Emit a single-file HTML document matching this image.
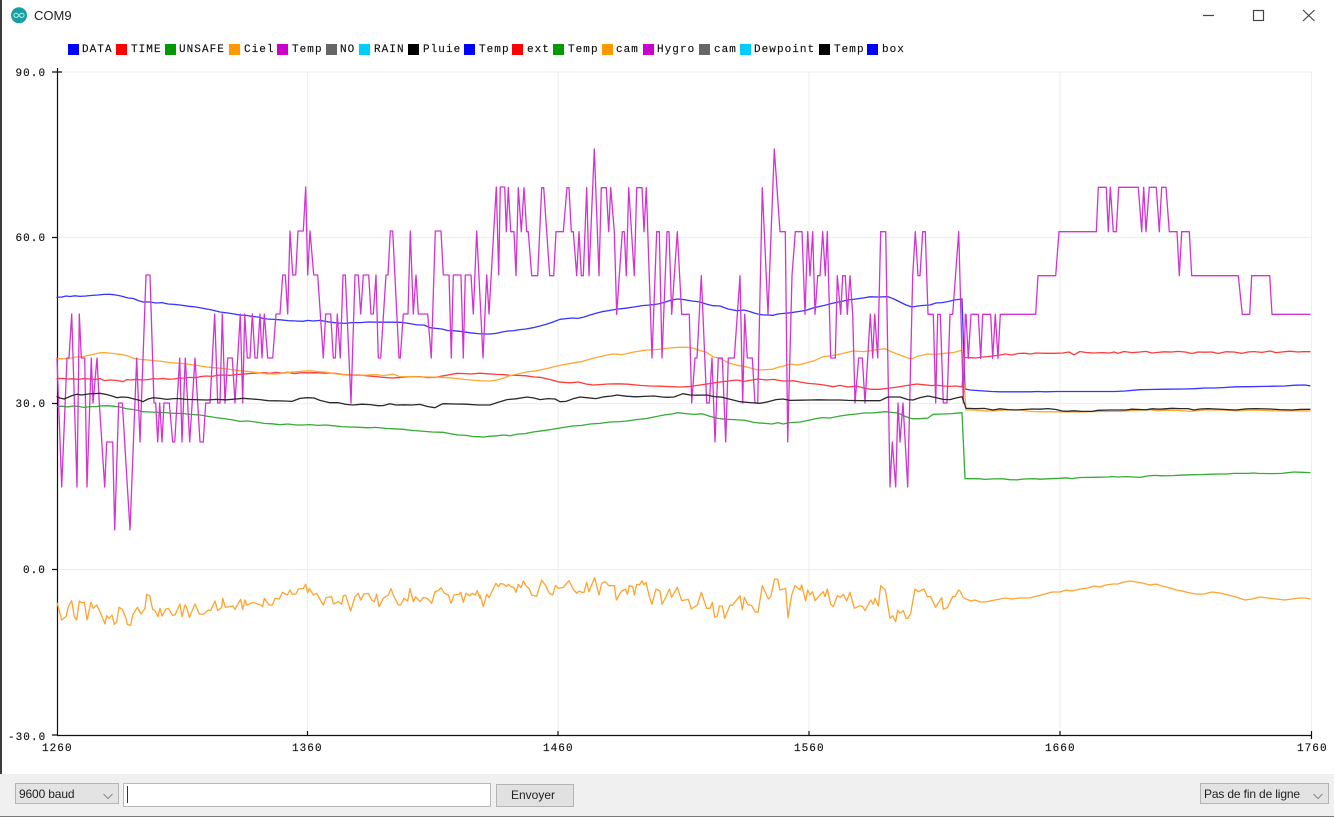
<!DOCTYPE html>
<html><head><meta charset="utf-8"><title>COM9</title>
<style>
html,body{margin:0;padding:0;background:#fff}
body{width:1334px;height:817px;position:relative;overflow:hidden;font-family:"Liberation Sans",sans-serif}
svg{position:absolute;left:0;top:0}
svg.chart{filter:blur(.3px)}
.t{position:absolute;font:13px "Liberation Sans",sans-serif;color:#222;left:34px;top:8px;filter:blur(.25px)}
.bar{position:absolute;left:0;top:774px;width:1334px;height:43px;background:#f0f0f0}
.sel{position:absolute;box-sizing:border-box;background:#e3e3e3;border:1px solid #b4b4b4;font-size:12px;color:#222;line-height:20px;padding-left:3px;letter-spacing:-.15px;filter:blur(.25px)}
.inp{position:absolute;box-sizing:border-box;left:123px;top:783px;width:368px;height:24px;background:#fff;border:1px solid #b9b9b9}
.btn{position:absolute;box-sizing:border-box;left:496px;top:784px;width:78px;height:23px;background:#e1e1e1;border:1px solid #b4b4b4;font-size:12px;color:#222;text-align:center;line-height:21px;padding-right:4px;filter:blur(.25px)}
.mono{font-family:"Liberation Mono",monospace;font-size:11px;fill:#111;stroke:#111;stroke-width:.15px;letter-spacing:1.05px}
.ln{fill:none;stroke-width:1.3;stroke-linejoin:round;stroke-linecap:round}
</style></head><body>
<svg class="chart" width="1334" height="817" viewBox="0 0 1334 817">
<!-- grid -->
<g stroke="#efefef" stroke-width="1.2">
<path d="M57 72H1312M57 237.5H1312M57 403.5H1312M57 569.5H1312"/>
<path d="M307.5 72V735M558 72V735M809 72V735M1060 72V735M1311.5 72V735"/>
</g>
<!-- axes -->
<g stroke="#111" stroke-width="1.2" fill="none">
<path d="M57.5 68V735.5H1312"/>
<path d="M52 72H62M52 237.5H58M52 403.5H58M52 569.5H58M52 735H58"/>
<path d="M307.5 731V735M558 731V735M809 731V735M1060 731V735M1311.5 731V739"/>
</g>
<!-- axis labels -->
<g class="mono">
<text x="15.5" y="76">90.0</text>
<text x="15.5" y="241">60.0</text>
<text x="15.5" y="407">30.0</text>
<text x="23" y="573">0.0</text>
<text x="8" y="740">-30.0</text>
<text x="42" y="751">1260</text>
<text x="292" y="751">1360</text>
<text x="543" y="751">1460</text>
<text x="794" y="751">1560</text>
<text x="1045" y="751">1660</text>
<text x="1297" y="751">1760</text>
</g>
<!-- legend -->
<g>
<rect x="68" y="44" width="11" height="11" fill="#00f"/>
<rect x="116" y="44" width="11" height="11" fill="#f00"/>
<rect x="165" y="44" width="11" height="11" fill="#090"/>
<rect x="229" y="44" width="11" height="11" fill="#f90"/>
<rect x="277" y="44" width="11" height="11" fill="#c0c"/>
<rect x="326" y="44" width="11" height="11" fill="#666"/>
<rect x="359" y="44" width="11" height="11" fill="#0cf"/>
<rect x="408" y="44" width="11" height="11" fill="#000"/>
<rect x="464" y="44" width="11" height="11" fill="#00f"/>
<rect x="512" y="44" width="11" height="11" fill="#f00"/>
<rect x="553" y="44" width="11" height="11" fill="#090"/>
<rect x="602" y="44" width="11" height="11" fill="#f90"/>
<rect x="643" y="44" width="11" height="11" fill="#c0c"/>
<rect x="699" y="44" width="11" height="11" fill="#666"/>
<rect x="740" y="44" width="11" height="11" fill="#0cf"/>
<rect x="819" y="44" width="11" height="11" fill="#000"/>
<rect x="867" y="44" width="11" height="11" fill="#00f"/>
</g>
<g class="mono">
<text x="82" y="52">DATA</text><text x="131" y="52">TIME</text><text x="179" y="52">UNSAFE</text>
<text x="244" y="52">Ciel</text><text x="292" y="52">Temp</text><text x="340" y="52">NO</text>
<text x="374" y="52">RAIN</text><text x="423" y="52">Pluie</text><text x="479" y="52">Temp</text>
<text x="527" y="52">ext</text><text x="568" y="52">Temp</text><text x="616" y="52">cam</text>
<text x="657" y="52">Hygro</text><text x="714" y="52">cam</text><text x="754" y="52">Dewpoint</text>
<text x="834" y="52">Temp</text><text x="882" y="52">box</text>
</g>

<!-- lower orange -->
<polyline class="ln" stroke="#ffa32e" style="stroke-width:3.9" transform="translate(40,570) scale(.33333)" points="52,100 65,150 78,140 85,110 95,92 103,140 110,150 118,93 125,98 133,97 141,150 153,97 160,115 170,105 180,125 195,162 200,137 207,145 216,135 223,163 230,155 237,112 247,118 258,145 262,163 272,166 278,135 292,112 303,132 315,115 320,73 329,77 338,118 345,123 354,140 360,115 366,138 378,117 385,115 398,136 405,135 420,102 426,140 435,105 440,112 448,142 465,102 478,132 490,133 505,120 512,122 525,93 533,122 545,113 548,85 556,112 578,108 585,118 602,88 608,118 615,90 620,105 640,97 655,103 662,105 668,110 673,85 687,105 697,105 705,85 718,87 727,67 742,75 750,60 757,73 768,72 775,57 790,55 797,43 803,68 808,55 820,75 830,70 850,105 858,83 875,80 880,102 895,95 905,103 910,77 917,76 932,123 945,80 955,70 962,90 972,72 985,70 995,90 1003,95 1010,73 1017,110 1030,85 1045,75 1053,56 1060,75 1075,105 1082,105 1092,85 1103,93 1110,56 1120,95 1127,80 1140,95 1150,82 1162,85 1175,100 1185,65 1195,62 1203,53 1213,70 1225,75 1233,100 1242,75 1257,73 1262,67 1270,97 1278,70 1290,78 1296,70 1305,75 1312,62 1320,85"/>
<polyline class="ln" stroke="#ffa32e" style="stroke-width:3.9" transform="translate(480,565) scale(.33333)" points="0,90 10,125 20,88 27,98 48,55 55,65 62,55 72,58 80,65 85,58 92,65 102,67 108,82 115,58 123,68 130,48 140,65 147,70 155,90 170,94 185,45 197,62 208,85 218,90 226,62 236,70 250,67 267,47 280,73 290,85 297,78 305,82 312,82 320,52 327,80 344,38 357,90 365,55 375,50 387,62 403,62 409,105 425,78 437,72 442,88 448,62 458,65 463,90 470,58 478,60 486,47 492,60 498,52 508,95 516,118 528,72 540,78 546,118 556,100 568,72 575,97 592,67 605,107 625,103 634,132 652,120 664,82 680,130 690,130 697,112 704,157 712,153 718,123 727,123 734,160 750,121 757,121 780,92 787,135 793,97 803,118 815,122 825,140 834,142 847,62 865,102 872,95 884,42 893,43 900,75 917,70 924,158 935,90 945,62 960,75 965,60 977,108 983,75 990,90 998,80 1005,107 1020,90 1030,80 1035,95 1042,72 1052,118 1060,125 1072,92 1082,97 1090,88 1100,108 1110,82 1123,130 1140,122 1147,124 1155,137 1172,105 1180,118 1185,100 1195,123 1202,62 1216,75 1230,160 1238,152 1247,170 1253,136 1260,145 1270,137 1278,160 1284,160 1292,145 1305,72 1315,80 1332,72 1342,95 1352,95 1367,127 1385,98 1390,133 1402,128 1418,95 1425,95 1436,75 1440,78"/>
<polyline class="ln" stroke="#ffa32e" points="960,591 963,597 966,599 971,601 975,600 980,602 985,602 990,601 995,600 1000,599 1005,598 1012,599 1020,598 1030,598 1037,596 1045,594 1052,592 1060,592 1066,590 1072,591 1080,589 1088,588 1094,586 1100,587 1106,585 1113,584 1118,584 1124,582 1130,581 1136,582 1142,583 1150,585 1156,584 1162,586 1170,588 1176,590 1182,591 1190,593 1196,594 1204,594 1212,592 1220,593 1228,595 1236,597 1245,600 1252,599 1260,597 1268,598 1276,599 1285,600 1292,599 1300,598 1305,598 1310,599"/>

<!-- upper blue -->
<polyline class="ln" stroke="#3535ff" points="57,297.3 62,297 66,296 70,296.5 75,295.8 80,296.4 86,296 92,295.4 98,295 104,294.4 110,294.3 116,295 122,296.2 128,298 133,298.4 138,300.5 143,302 150,302 156,303 162,302.6 168,304 174,304.4 180,305 188,306.2 196,307 204,308.5 212,310 220,312 228,313 234,314 240,315 246,315.4 252,316.4 258,317 263,318.4 267,319 274,319.4 280,319.8 288,320.6 296,321 303,321.3 308,320.4 313,321 320,320.4 328,321.8 337,323 345,323.4 352,322.6 360,322.6 368,322 378,322.2 390,322.2 400,322.3 406,323 412,324 418,325 424,325 430,327.7 436,328.4 442,329 448,330.6 455,330.8 463,331.7 470,332.8 478,333.6 485,334 490,334 496,333.4 502,332 508,331 514,330.6 520,329.6 526,329 533,327.7 540,326 546,324.4 553,322 560,319.3 566,318.6 572,318 578,318.4 584,317 590,315 596,313.2 602,311.7 610,310.4 618,309 626,308.2 634,307 642,305.6 650,305 658,304 664,302.4 672,300 678,299 684,299.6 692,301 700,302 706,304 713,305.7 720,306 728,309 737,310.7 744,310 750,311.6 756,313.6 762,314.8 768,315 773,315.3 778,314 784,313.4 790,312.8 798,311.6 806,310.4 813,308 820,306.4 826,305 832,303.4 840,301.7 848,300 856,299 863,298 870,296.8 878,297 888,296.7 894,299 900,302 906,305 912,307 918,306 924,305.4 930,305 936,303 942,302.6 948,301.6 954,300 962,299 965,389 970,390 977,390.5 984,391 992,391.5 1000,391.8 1010,391.8 1022,391.8 1030,391.8 1038,391.5 1046,391.8 1056,391.5 1065,391.5 1075,391.5 1085,391.5 1095,391.5 1105,391.5 1115,391.5 1125,391 1140,389.7 1150,389.5 1165,389.2 1185,389 1195,388.7 1205,388 1215,388 1225,387.5 1235,386.8 1250,386.7 1265,386.4 1285,386 1295,385.2 1305,385 1310,385.8"/>
<!-- red -->
<polyline class="ln" stroke="#ff3a3a" points="57,378.7 62,378.4 68,379 73,378.8 78,379.4 84,378.6 90,379 96,379.4 100,378.6 104,380.6 110,380 116,380.4 120,381 123,381.7 127,379.6 131,380 136,379.3 142,380 148,379.6 153,378.6 158,379 163,378.4 168,379.2 173,379 178,378.4 184,378 190,377.4 196,377.6 200,376.7 206,376 212,376.4 218,375.2 224,375 230,375.4 236,374.6 240,374.3 246,373.8 252,373.4 258,373 264,372.7 270,373.3 276,372.4 282,373.2 288,372.2 294,373.6 300,372.8 308,372.8 317,372.7 324,373.2 330,373 336,373.4 342,374.4 348,374.8 353,375 360,375 368,376 376,376.6 384,377.4 392,378 397,377.7 404,377.2 412,376.6 420,376.6 428,377.6 436,377.3 442,376 448,375 457,373.3 464,373.6 472,374 480,373.2 488,373.8 496,374.4 504,374.6 510,375.3 518,375.4 526,375.8 534,377 540,377.3 546,378.6 552,380 558,381.8 563,382.3 570,382.8 578,382 586,384 593,385 600,384.6 608,384 618,383.8 628,384.2 640,385.4 650,386 660,386.2 670,386.6 680,387 690,386.5 700,385 707,384 716,382.6 725,381.4 737,380 744,381.4 752,380 758,379 766,380 774,379.4 782,381 790,381 793,380.7 800,382 808,383.4 816,384 824,385 833,386.7 840,385.4 848,387 856,386 864,388 870,389.3 880,389.3 890,388 898,387 906,385.6 917,384 924,384.8 932,385.6 936,385 943,386 950,386.4 956,386 962,387 964.5,357.5 970,357.7 976,358 982,357 988,356.6 993,356 1000,355 1006,354 1012,355 1018,353.5 1024,353.2 1030,354 1036,353 1045,353.3 1054,353.3 1063,353 1069,352 1074,354.8 1080,351.5 1086,352.5 1094,353 1102,352.6 1110,353 1114,352 1118,353.4 1124,351.5 1132,352.6 1140,352 1146,351.4 1152,353 1158,352.4 1164,351.8 1172,352 1178,351.4 1185,352 1192,353.5 1198,352 1205,352.2 1212,352 1218,353.5 1226,351.8 1234,352 1242,353.4 1248,352 1254,351.6 1262,352.4 1270,351 1276,352.6 1282,352 1290,351.2 1298,352 1304,351.6 1310,351.7"/>
<!-- green -->
<polyline class="ln" stroke="#33ad33" points="57,406.7 62,406.2 68,407 72,406 78,406.4 84,407.4 90,406.6 96,406.6 102,405.8 107,405.7 114,406.2 120,407 126,408.6 132,409.4 138,410.4 143,411.7 150,412 158,412.4 166,412.6 174,413.4 182,413.4 190,414.4 200,415 208,416.4 216,417.6 224,418.6 233,420 240,421.4 248,421 256,422 264,423.4 272,423.8 280,424.7 288,424 296,425 303,425 310,424.6 318,425.4 326,425 334,425.8 342,426.6 350,427 360,427.3 368,427.8 376,427.4 386,428.4 394,428.8 403,429.3 412,430.4 420,431 432,432 443,432.3 450,433.6 458,435 466,435.4 472,436.4 477,436.7 484,437 490,436.2 497,435.8 503,435 510,435.7 518,434 525,433.6 533,432 542,430.8 552,429.4 562,427.6 573,426 582,425.4 590,424 600,423.4 610,422 620,421.6 627,421 636,419.6 646,418.6 654,417 664,415 672,414 677,412.7 686,413.6 694,414.4 702,413.8 710,416.4 718,418.4 727,419.3 735,419.6 745,420.4 755,422.6 765,423.4 772,424 778,422.6 783,424 790,422.6 800,422 810,420 816,418.6 822,417.6 830,418 840,416 847,415 856,414 864,413 872,413 885,411.7 892,412.4 898,413 904,416 912,418.7 920,418.7 928,418 933,414.3 942,414 952,413.6 962,412.7 965,478.7 972,478.7 980,478.8 985,479.4 993,478.9 1003,478.8 1010,479.7 1017,479.9 1024,479 1034,478.7 1040,479.2 1050,478.7 1060,478.3 1066,477.8 1072,478.6 1080,477.5 1095,477.3 1108,477 1112,476.5 1118,477 1126,476.6 1134,477 1140,477.4 1147,476 1155,475.4 1162,475.8 1172,475.6 1180,475.2 1190,474.8 1200,474.6 1212,474.2 1220,474 1227,474 1234,473.4 1248,473.4 1254,473 1258,473.4 1270,473.6 1282,473.4 1288,472.7 1294,472 1302,472.3 1310,472.6"/>
<!-- orange -->
<polyline class="ln" stroke="#ffa632" points="57,358.7 64,358.6 70,358.2 76,357 82,356.8 90,355 96,353.8 100,352.7 106,352.6 112,353.4 120,354.3 128,356 134,358.4 140,359.4 146,359.8 154,360.6 162,361.4 170,362.6 180,363.3 190,364.4 200,366 210,367.3 220,368.2 232,369.6 240,370.7 250,371.7 258,372.6 266,373.8 274,374 282,373.4 292,372 300,371.4 310,370.7 318,371.6 326,372.2 334,373.6 342,374.6 350,375.3 360,375.4 368,375 376,374.6 384,375.6 393,374 400,376.7 410,376.7 420,376.9 430,377 443,377.3 456,378.4 466,379.6 476,380.4 484,381 490,381 497,380 505,377.6 510,375.6 518,374 526,372 537,370.7 548,368.2 560,365.4 572,363.2 583,361.3 594,358 604,355.8 613,354 622,354.6 632,352.4 640,351 647,350 656,349.6 666,348.4 674,347.6 680,347.3 688,347.4 694,348.4 700,350.6 706,352 713,356.7 720,358.4 728,362.6 737,365.3 744,366.2 752,368.4 758,370 766,369.6 772,369.3 778,367.4 784,366 790,364 798,365 806,363 814,360.8 823,356.7 832,355.6 842,353.6 853,351 864,351.6 875,350 885,348.7 892,352 900,355 908,358 912,358.7 918,356.2 927,354 936,354.4 946,353.2 954,352.4 962,350.3 966,410 975,410 984,410.8 994,411 1005,410 1020,410 1032,411.5 1045,411.8 1060,411.8 1080,412 1100,411.5 1120,411.4 1136,410.4 1150,409.6 1158,410.8 1166,410.2 1178,410.4 1190,411.4 1205,410 1222,410 1236,410.8 1250,410 1270,410.6 1285,411 1300,410.7 1310,411"/>
<!-- magenta -->
<polyline class="ln" stroke="#d233d2" points="57,358 61.7,487 67,358 69,358 71.7,314 77,487 79.3,314 81.3,358 84.7,358 87,487 91.3,358 93,403 97,358 99.3,403 104.7,487 106.7,442 112.7,442 114.7,530 118.7,403 122.3,403 130,530 136.7,358 140,442 146,275 150,275 154,403 155.7,403 157.7,442 159.7,403 162,442 164,403 169.3,403 172.7,442 174.7,442 179.7,358 182,442 185.3,358 189.7,442 195,358 200,442 203.3,442 205.7,403 210,403 214.7,314 217.7,403 220,403 222.3,314 225,403 227.7,358 232.3,358 235,403 240.3,314 242.7,403 244.7,314 247.3,358 250,358 252.3,314 255,358 257.3,358 260,314 262,358 264.3,314 267.7,358 272.7,358 276,314 280,314 282.7,275 285.3,275 287.7,314 290,231 292.7,275 295.7,275 298,231 303.3,231 305.7,187 307.7,275 310,231 313.7,275 317.7,275 323.3,358 325.7,314 330.7,314 333.3,358 335.3,358 337.3,314 340.3,358 343,275 345.3,275 349,358 351,403 355,275 358.3,275 360.7,314 363.3,275 368.7,275 371,314 373.3,314 376,275 378.3,358 380.7,358 386,275 388,275 390.3,231 392.7,231 399,358 400.3,358 403.3,314 408,314 410.3,231 413.3,314 416,275 418.3,314 427.7,314 431.3,358 435.3,231 441,231 443.3,275 449,275 451.3,358 453.3,275 461,275 463.3,358 465.3,275 471,275 473.3,314 476.7,231 483,358 486.7,275 489,314 496.3,187 498.7,275 500.3,187 504.7,187 506.3,231.7 508.3,187.7 510.7,231.7 514,231.7 516,275.7 518.3,187.7 521.3,231.7 524,187.7 526.7,231.7 528.3,231.7 531.7,275.7 537.7,275.7 541.7,187.7 543.7,187.7 549.7,275.7 553.7,275.7 556,231.7 563.3,231.7 567,187.7 569,187.7 571.3,231.7 573.3,231.7 576.7,275.7 579,231.7 581.3,275.7 583.3,275.7 586.7,187.7 589,275.7 594.3,149 599,275.7 601.3,187.7 606.3,187.7 608.7,231.7 610.7,187.7 614.3,231.7 616.7,314.3 622.3,231.7 624.3,231.7 626.3,275.7 628.7,187.7 634.3,275.7 636.7,187.7 642,187.7 644,231.7 646.3,187.7 652,358 656.7,231.7 659.3,231.7 662,358 667,231.7 669,231.7 671.7,314.3 677.3,231.7 681.7,314.3 689.3,314.3 691.7,403 695,358 697,358 701.3,275.7 706.7,403 709.3,403 712,358 715,442 718.3,358 722.3,358 725.7,442 728.3,358 734.3,358 740,275.7 742.7,403 744.7,314.3 747.3,358 752.3,358 755,403 757.7,403 762.3,187.7 768,314.3 774.3,149 780,231.7 785.3,231.7 787.7,442 792,275.7 795.3,231.7 802,231.7 805,314.3 807.7,231.7 810,275.7 812.7,231.7 815,314.3 817.7,275.7 820,275.7 822.7,231.7 825.3,275.7 827.3,231.7 830.7,358 835.3,358 837.3,275.7 840.7,314.3 842.7,275.7 845.3,275.7 847.3,314.3 850,275.7 852.7,314.3 855,403 858.7,358 862.3,358 865,403 870.3,314.3 872.7,358 874.7,314.3 877.7,358 880.7,231.7 885.7,231.7 890,487 892.3,442 895.7,487 898,403 900,442 903,403 907.7,487 912.7,275.7 915.3,231.7 918,275.7 920,275.7 922.7,231.7 925.3,231.7 928,314.3 933.3,314.3 935.7,403 937.7,314.3 940.3,314.3 943.3,403 947,403 950,314.3 952.7,314.3 958.7,231.7 963.3,403 965.3,314.3 966,314.3 968.3,358.3 971,314.3 978.3,314.3 980.7,358.3 982.7,314.3 990.7,314.3 992.7,358.3 995.3,314.3 998,358.3 1000.3,314.3 1035.7,314.3 1038,275.7 1055.7,275.7 1059,231.7 1096.3,231.7 1098.3,187.3 1106.3,187.3 1108.3,231.7 1110.3,187.3 1113.3,231.7 1116.3,231.7 1118.7,187.3 1138.3,187.3 1141.7,231.7 1143.7,187.3 1146,231.7 1149.3,187.3 1156.3,187.3 1159.3,231.7 1161.7,187.3 1166,187.3 1169.3,231.7 1177,231.7 1179.3,275.7 1181.7,231.7 1189.3,231.7 1191.7,275.7 1238.3,275.7 1242.3,314.3 1249.7,314.3 1251.7,275.7 1269.7,275.7 1272,314.3 1310,314.3"/>
<!-- black -->
<polyline class="ln" stroke="#2a2a2a" points="57,396.7 60,398 64,399 68,397.4 72,395.6 77,394.3 82,395 88,394 94,393.6 100,393.3 106,394.4 112,396 117,397.7 122,397 128,397.4 134,399 140,400.4 143,401.7 148,399 153,397.7 160,398.4 167,399.4 174,398.6 180,398.6 186,399.4 194,399.6 207,400 216,399.4 226,399.8 236,399 243,398.3 252,399 260,399.6 268,400.7 276,400.8 284,401 292,401.4 300,398.4 307,397.7 314,398 320,400.4 330,402.7 338,402.6 346,404.4 353,405 362,404.2 370,404.6 378,405.7 383,405.6 390,403.7 396,405 404,404.8 412,405 420,404.4 428,406.6 435,407.7 440,405 443,403.7 454,404 466,404.2 478,405 490,405 497,402.6 500,401.7 507,399.6 516,398.8 527,397 534,398 540,399.6 548,398.6 555,399 560,401.7 566,401.4 573,398.8 580,397 588,397.8 596,398.6 604,396.8 612,396 617,395 626,396.2 636,396.8 644,396.4 654,396 662,397 667,397.3 674,397 683,393.7 690,395 698,395.2 707,395 714,396.6 722,397.2 730,399.3 740,401.7 750,402.6 760,403.3 768,401.8 776,399.6 783,399 790,400.4 800,400.2 810,400 818,399.8 830,400 840,400 848,400.4 860,400.6 870,400.7 880,400.7 888,397 900,397 908,399.6 913,400 920,397.6 928,396 936,397.6 943,399.4 950,399.6 956,398 962,396.7 966,408.3 975,408.6 984,408.4 993,410 1000,408.8 1008,409.6 1016,410 1026,409.4 1032,409 1040,409.2 1048,408.6 1056,409.5 1062,411 1067,411.3 1074,410.8 1082,411.4 1092,411.4 1098,410.3 1110,410 1126,410 1132,409.2 1146,409.8 1152,408.8 1160,409.2 1172,408.3 1180,408.6 1188,408.6 1194,410 1200,409 1208,408.6 1216,409 1228,409.6 1236,410 1246,408.9 1256,408.6 1270,409 1280,409.6 1292,410 1300,409.4 1310,409.3"/>

<!-- title icons -->
<circle cx="19" cy="15.3" r="8" fill="#16a0a4"/>
<path d="M19 15.3c-1-1.6-2-2.1-3-2.1a2.1 2.1 0 0 0 0 4.2c1 0 2-.5 3-2.1c1-1.6 2-2.1 3-2.1a2.1 2.1 0 0 1 0 4.2c-1 0-2-.5-3-2.1z" fill="none" stroke="#bfe6e6" stroke-width="1"/>
<path d="M1203 15.5H1214" stroke="#444" stroke-width="1.2"/>
<rect x="1253.5" y="10.5" width="10" height="10" fill="none" stroke="#444" stroke-width="1.2"/>
<path d="M1303 10L1314.5 21M1314.5 10L1303 21" stroke="#444" stroke-width="1.2" fill="none"/>
</svg>

<div class="t">COM9</div>
<div style="position:absolute;left:0;top:0;width:1.5px;height:817px;background:#3c3c3c"></div>
<div class="bar"></div>
<div style="position:absolute;left:0;top:815.5px;width:1334px;height:1.5px;background:#7a7a7a"></div>
<div class="sel" style="left:15px;top:783px;width:104px;height:21px">9600 baud</div>
<div class="inp"></div>
<div style="position:absolute;left:127px;top:786px;width:1px;height:17px;background:#333"></div>
<div class="btn">Envoyer</div>
<div class="sel" style="left:1200px;top:783px;width:129px;height:21px">Pas de fin de ligne</div>
<svg width="1334" height="817" viewBox="0 0 1334 817" style="pointer-events:none">
<path d="M103.5 794L108 798.5L112.5 794M1313.5 794L1318 798.5L1322.5 794" fill="none" stroke="#888" stroke-width="1"/>
</svg>
</body></html>
